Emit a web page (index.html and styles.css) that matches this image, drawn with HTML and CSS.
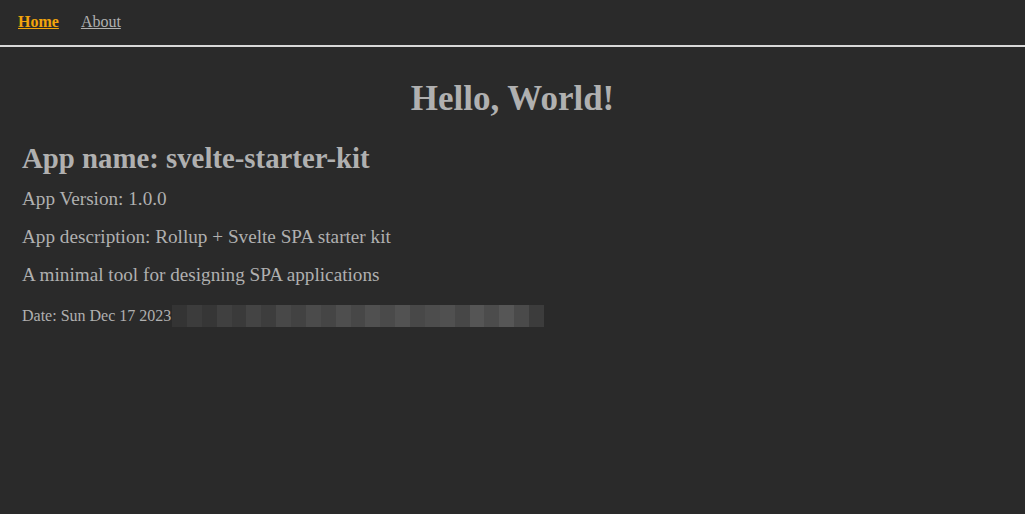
FILE: index.html
```html
<!DOCTYPE html>
<html>
<head>
<meta charset="utf-8">
<link rel="stylesheet" href="styles.css">
</head>
<body>
<nav class="nav">
  <a class="nav-link active" href="#">Home</a>
  <a class="nav-link" href="#">About</a>
</nav>
<main class="main">
  <h1 class="title">Hello, World!</h1>
  <h2 class="app-name">App name: svelte-starter-kit</h2>
  <p class="info">App Version: 1.0.0</p>
  <p class="info">App description: Rollup + Svelte SPA starter kit</p>
  <p class="info">A minimal tool for designing SPA applications</p>
  <p class="date">Date: Sun Dec 17 2023<span class="mask"></span></p>
</main>
</body>
</html>
```
FILE: styles.css
```css
html, body {
  margin: 0;
  padding: 0;
  background: #2a2a2a;
  color: #b0b0b0;
  font-family: "Liberation Serif", "Times New Roman", serif;
  height: 100%;
}
.nav {
  display: flex;
  gap: 22px;
  padding: 13px 18px 0;
  height: 32px;
  border-bottom: 2px solid #d8d8d8;
  font-size: 16px;
}
.nav-link {
  color: #b0b0b0;
  text-decoration: underline;
}
.nav-link.active {
  color: #f2a50c;
  font-weight: bold;
}
.main {
  padding: 0 22px;
}
.title {
  text-align: center;
  font-size: 35px;
  margin: 32px 0 0;
  line-height: 40px;
}
.app-name {
  font-size: 28.8px;
  margin: 22px 0 0;
  line-height: 34px;
}
.info {
  font-size: 19.2px;
  margin: 16px 0 0;
  line-height: 22px;
}
.app-name + .info {
  margin-top: 13px;
}
.date {
  font-size: 16px;
  margin: 19px 0 0;
  line-height: 20px;
  display: flex;
  align-items: center;
}
.mask {
  display: inline-block;
  width: 372px;
  height: 22px;
  margin-left: 1px;
  background:
    linear-gradient(90deg,
      #343434 0 4%, #3c3c3c 4% 8%, #363636 8% 12%, #404040 12% 16%,
      #3a3a3a 16% 20%, #444 20% 24%, #3d3d3d 24% 28%, #484848 28% 32%,
      #424242 32% 36%, #4b4b4b 36% 40%, #454545 40% 44%, #4e4e4e 44% 48%,
      #474747 48% 52%, #505050 52% 56%, #4a4a4a 56% 60%, #525252 60% 64%,
      #484848 64% 68%, #4d4d4d 68% 72%, #505050 72% 76%, #474747 76% 80%,
      #555 80% 84%, #4c4c4c 84% 88%, #565656 88% 92%, #4a4a4a 92% 96%,
      #3c3c3c 96% 100%);
}
```
